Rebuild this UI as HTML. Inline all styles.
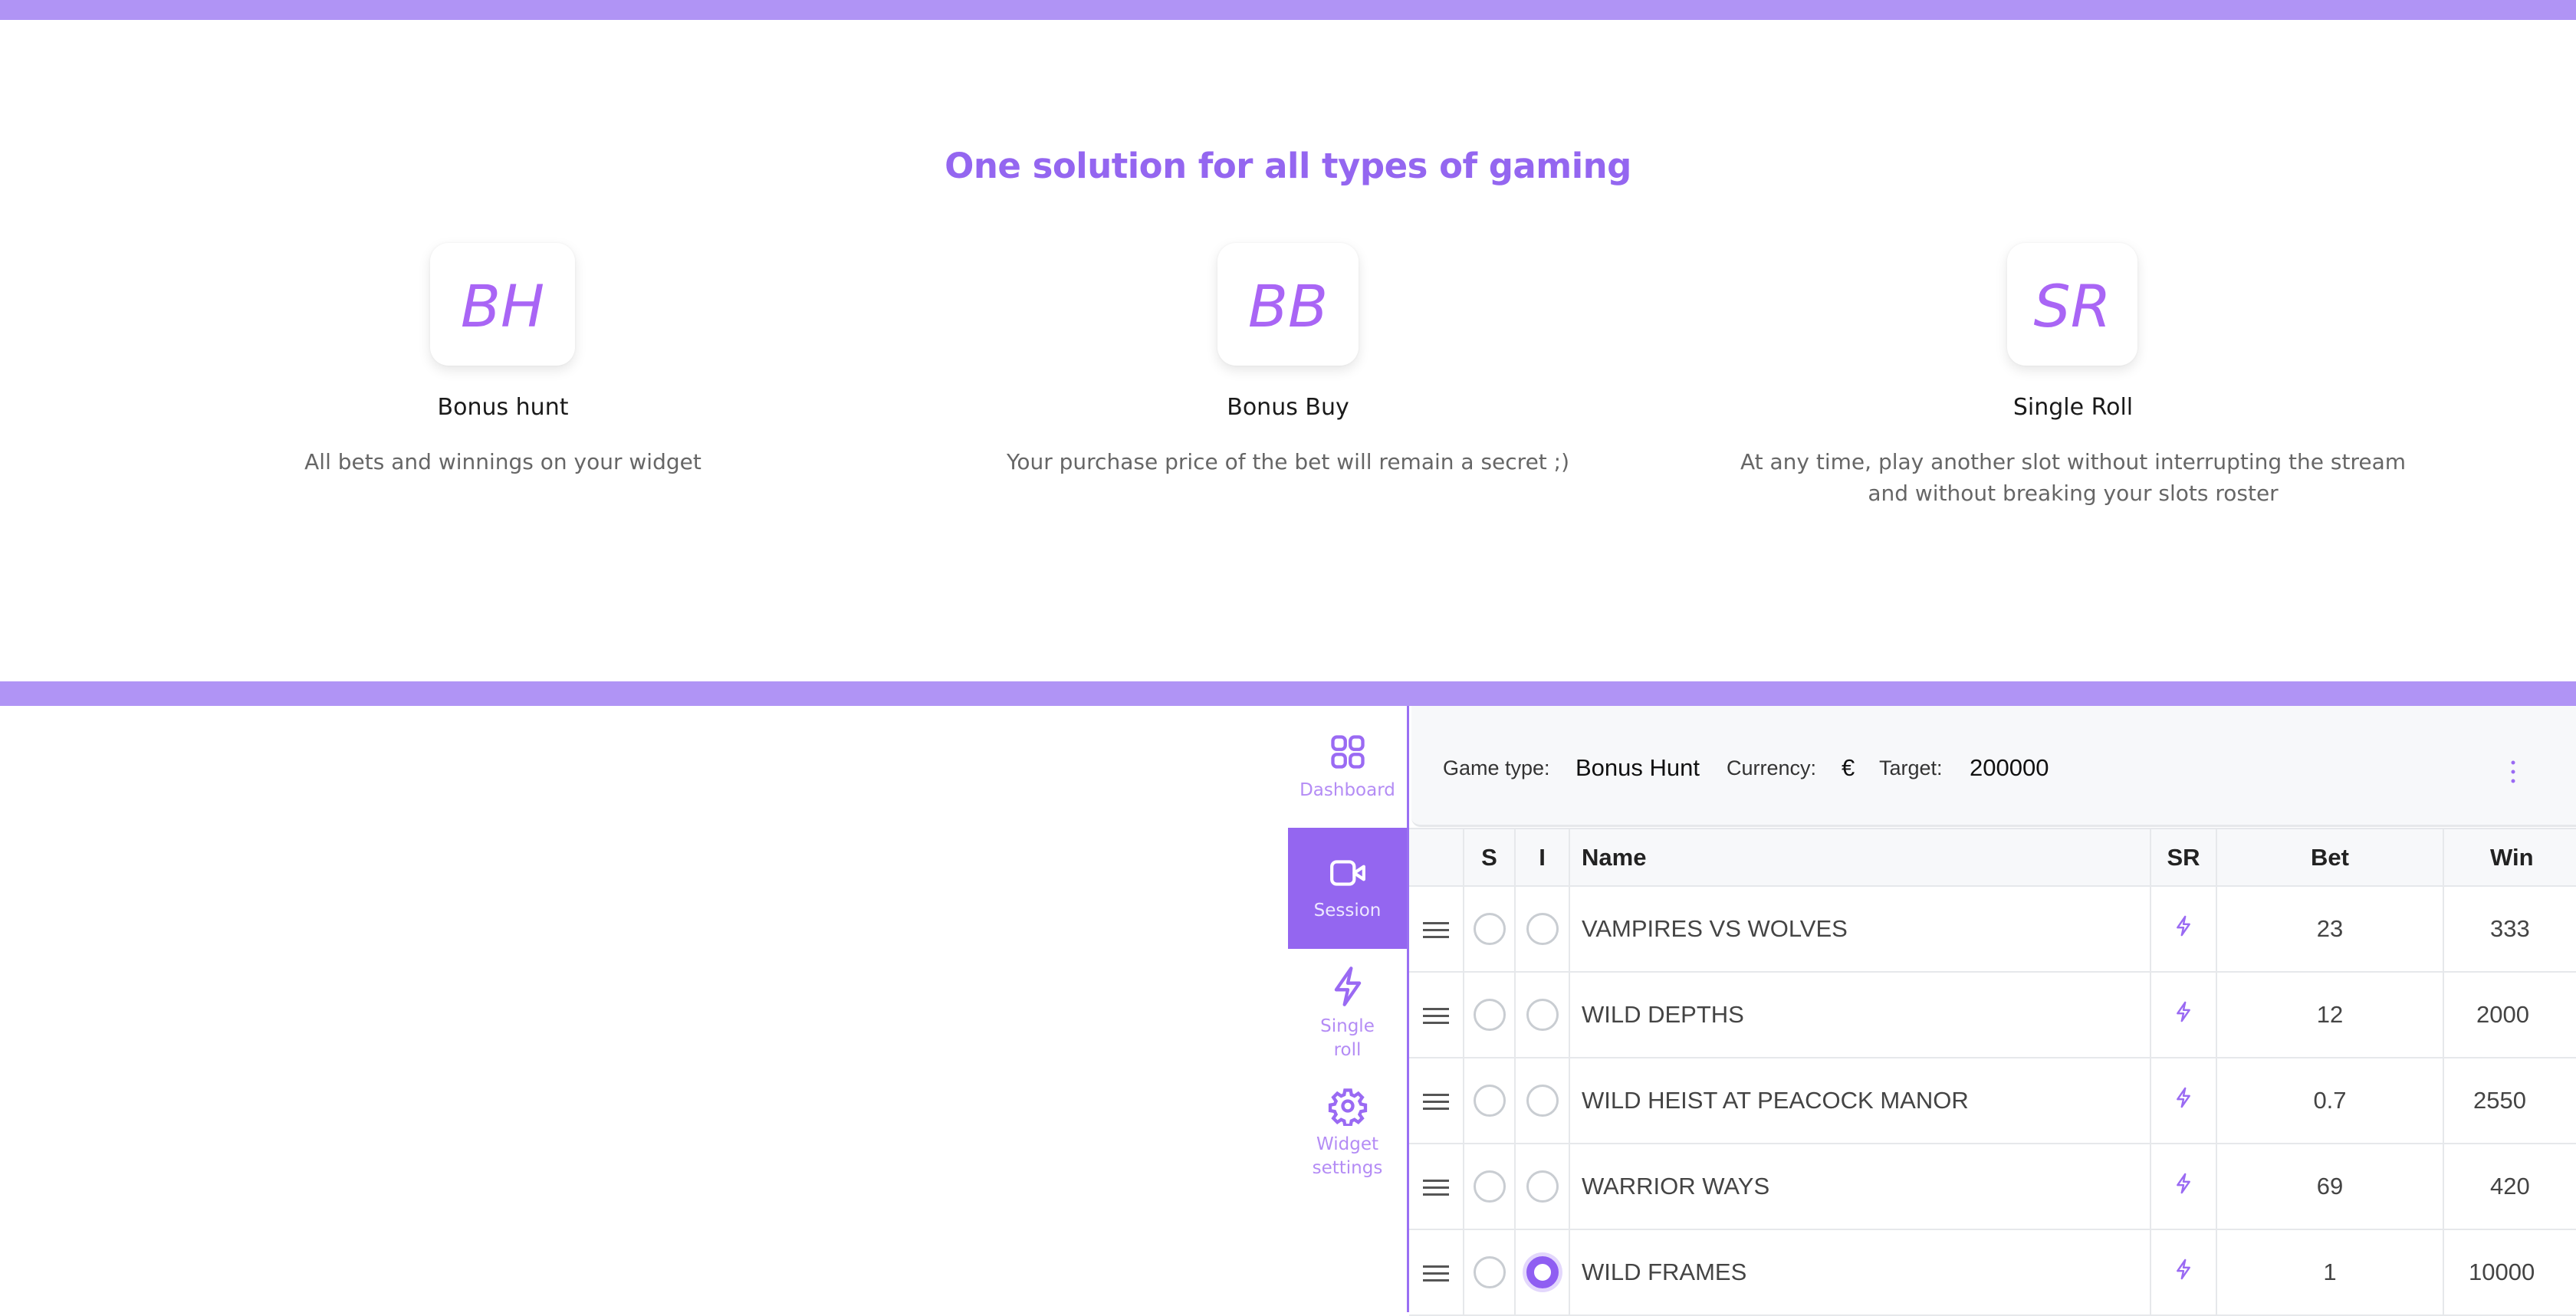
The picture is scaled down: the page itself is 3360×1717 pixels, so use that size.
<!DOCTYPE html>
<html><head><meta charset="utf-8">
<style>
*{margin:0;padding:0;box-sizing:border-box}
html,body{width:3360px;height:1712px;overflow:hidden;background:#fff;font-family:"DejaVu Sans","Liberation Sans",sans-serif}
.abs{position:absolute}
.bar{position:absolute;left:0;width:3360px;background:#b094f5}
h1{position:absolute;top:190px;left:0;width:3360px;text-align:center;font-size:45px;font-weight:bold;color:#9466f0;letter-spacing:-0.5px}
.card{position:absolute;top:317px;height:160px;background:#fff;border-radius:24px;box-shadow:0 6px 16px rgba(0,0,0,0.10),0 0 3px rgba(0,0,0,0.05);text-align:center;line-height:166px;font-size:76px;font-style:italic;font-weight:300;color:#a965f5;font-family:"DejaVu Sans",sans-serif}
.t{position:absolute;width:1000px;text-align:center;font-size:30px;color:#1a1a1a;top:514px}
.d{position:absolute;width:1000px;text-align:center;font-size:28px;color:#666;top:582px;line-height:41px}
.side{position:absolute;left:1680px;top:921px;width:158px;height:791px;border-right:3px solid #9a70f3}
.nav{position:absolute;left:0;width:155px;text-align:center;color:#b48cf5;font-size:23px;line-height:31px}
.hdr{position:absolute;left:1841px;top:921px;width:1519px;height:158px;background:#f7f8fa;border-bottom-left-radius:12px;border-bottom:3px solid #e6e8eb}
.hdr span{position:absolute;top:66px;font-family:"Liberation Sans",sans-serif;font-size:27px;color:#333}
.hdr span.b{font-size:31px;color:#111;top:63px}
table{position:absolute;left:1838px;top:1080px;width:1642px;border-collapse:collapse;font-family:"Liberation Sans",sans-serif;table-layout:fixed}
td,th{border:2px solid #e6e8eb;height:112px;font-size:31px;color:#444;font-weight:normal;white-space:nowrap}
th{height:75px;background:#f7f8fa;color:#222;font-weight:bold;font-size:31px}
tr td:first-child,tr th:first-child{border-left:none}
.c{text-align:center}
.nm{padding-left:15px;text-align:left}
.rad{display:inline-block;width:42px;height:42px;border-radius:50%;border:3px solid #c9cdd2;vertical-align:middle}
.on{border:10px solid #8f5ef2;box-shadow:0 0 0 5px rgba(143,94,242,0.25)}
.ham{display:inline-block;width:34px;vertical-align:middle}
.ham i{display:block;height:3px;background:#555;margin:6px 0}
</style></head><body>
<div class="bar" style="top:0;height:26px"></div>
<h1>One solution for all types of gaming</h1>

<div class="card" style="left:561px;width:189px">BH</div>
<div class="card" style="left:1588px;width:184px">BB</div>
<div class="card" style="left:2618px;width:170px">SR</div>

<div class="t" style="left:156px">Bonus hunt</div>
<div class="t" style="left:1180px">Bonus Buy</div>
<div class="t" style="left:2204px">Single Roll</div>
<div class="d" style="left:156px">All bets and winnings on your widget</div>
<div class="d" style="left:1180px">Your purchase price of the bet will remain a secret ;)</div>
<div class="d" style="left:2104px;width:1200px">At any time, play another slot without interrupting the stream<br>and without breaking your slots roster</div>

<div class="bar" style="top:889px;height:32px"></div>

<div class="side">
 <div class="nav" style="top:34px">
  <svg width="52" height="52" viewBox="0 0 24 24" fill="none" stroke="#9a6af3" stroke-width="2"><rect x="3" y="3" width="7.5" height="7.5" rx="2.5"/><rect x="13.5" y="3" width="7.5" height="7.5" rx="2.5"/><rect x="3" y="13.5" width="7.5" height="7.5" rx="2.5"/><rect x="13.5" y="13.5" width="7.5" height="7.5" rx="2.5"/></svg>
  <div style="margin-top:0px">Dashboard</div></div>
 <div class="nav" style="top:159px;height:158px;background:#9466f0;color:#eee8ff;padding-top:38px">
  <svg width="50" height="42" viewBox="0 0 24 20" fill="none" stroke="#fff" stroke-width="2" stroke-linejoin="round"><rect x="2" y="3" width="14" height="14" rx="3"/><path d="M16 10l6-4v8z"/></svg>
  <div style="margin-top:4px">Session</div></div>
 <div class="nav" style="top:338px">
  <svg width="44" height="56" viewBox="0 0 20 26" fill="none" stroke="#9a6af3" stroke-width="2" stroke-linejoin="round"><path d="M12 2L3 15h7l-2 9 9-13h-7z"/></svg>
  <div>Single<br>roll</div></div>
 <div class="nav" style="top:496px">
  <svg width="52" height="52" viewBox="0 0 24 24" fill="none" stroke="#9a6af3" stroke-width="2"><path d="M10.3 2.5h3.4l.5 2.7 1.8.8 2.3-1.6 2.4 2.4-1.6 2.3.8 1.8 2.7.5v3.4l-2.7.5-.8 1.8 1.6 2.3-2.4 2.4-2.3-1.6-1.800.8-.5 2.7h-3.4l-.5-2.7-1.8-.8-2.3 1.6-2.4-2.4 1.6-2.3-.8-1.8-2.7-.5v-3.4l2.7-.5.8-1.8-1.6-2.3 2.4-2.4 2.3 1.6 1.8-.8z"/><circle cx="12" cy="12" r="3"/></svg>
  <div>Widget<br>settings</div></div>
</div>

<div class="hdr">
 <span style="left:41px">Game type:</span>
 <span class="b" style="left:214px">Bonus Hunt</span>
 <span style="left:411px">Currency:</span>
 <span class="b" style="left:561px">€</span>
 <span style="left:610px">Target:</span>
 <span class="b" style="left:728px">200000</span>
 <svg class="abs" style="left:1432px;top:70px" width="10" height="34" viewBox="0 0 10 34"><circle cx="5" cy="4" r="2.5" fill="#9a6af3"/><circle cx="5" cy="16" r="2.5" fill="#9a6af3"/><circle cx="5" cy="28" r="2.5" fill="#9a6af3"/></svg>
</div>

<table>
<colgroup><col style="width:71px"><col style="width:67px"><col style="width:71px"><col style="width:758px"><col style="width:86px"><col style="width:296px"><col style="width:293px"></colgroup>
<tr><th></th><th class="c">S</th><th class="c">I</th><th class="nm">Name</th><th class="c">SR</th><th class="c">Bet</th><th style="text-align:left;padding-left:60px">Win</th></tr>
<tr><td class="c"><span class="ham"><i></i><i></i><i></i></span></td><td class="c"><span class="rad"></span></td><td class="c"><span class="rad"></span></td><td class="nm">VAMPIRES VS WOLVES</td><td class="c"><svg width="22" height="34" viewBox="0 0 20 26" fill="none" stroke="#9a6af3" stroke-width="2.2" stroke-linejoin="round"><path d="M12 2L3 15h7l-2 9 9-13h-7z"/></svg></td><td class="c">23</td><td style="padding-left:60px">333</td></tr>
<tr><td class="c"><span class="ham"><i></i><i></i><i></i></span></td><td class="c"><span class="rad"></span></td><td class="c"><span class="rad"></span></td><td class="nm">WILD DEPTHS</td><td class="c"><svg width="22" height="34" viewBox="0 0 20 26" fill="none" stroke="#9a6af3" stroke-width="2.2" stroke-linejoin="round"><path d="M12 2L3 15h7l-2 9 9-13h-7z"/></svg></td><td class="c">12</td><td style="padding-left:42px">2000</td></tr>
<tr><td class="c"><span class="ham"><i></i><i></i><i></i></span></td><td class="c"><span class="rad"></span></td><td class="c"><span class="rad"></span></td><td class="nm">WILD HEIST AT PEACOCK MANOR</td><td class="c"><svg width="22" height="34" viewBox="0 0 20 26" fill="none" stroke="#9a6af3" stroke-width="2.2" stroke-linejoin="round"><path d="M12 2L3 15h7l-2 9 9-13h-7z"/></svg></td><td class="c">0.7</td><td style="padding-left:38px">2550</td></tr>
<tr><td class="c"><span class="ham"><i></i><i></i><i></i></span></td><td class="c"><span class="rad"></span></td><td class="c"><span class="rad"></span></td><td class="nm">WARRIOR WAYS</td><td class="c"><svg width="22" height="34" viewBox="0 0 20 26" fill="none" stroke="#9a6af3" stroke-width="2.2" stroke-linejoin="round"><path d="M12 2L3 15h7l-2 9 9-13h-7z"/></svg></td><td class="c">69</td><td style="padding-left:60px">420</td></tr>
<tr><td class="c"><span class="ham"><i></i><i></i><i></i></span></td><td class="c"><span class="rad"></span></td><td class="c"><span class="rad on"></span></td><td class="nm">WILD FRAMES</td><td class="c"><svg width="22" height="34" viewBox="0 0 20 26" fill="none" stroke="#9a6af3" stroke-width="2.2" stroke-linejoin="round"><path d="M12 2L3 15h7l-2 9 9-13h-7z"/></svg></td><td class="c">1</td><td style="padding-left:32px">10000</td></tr>
</table>
</body></html>
